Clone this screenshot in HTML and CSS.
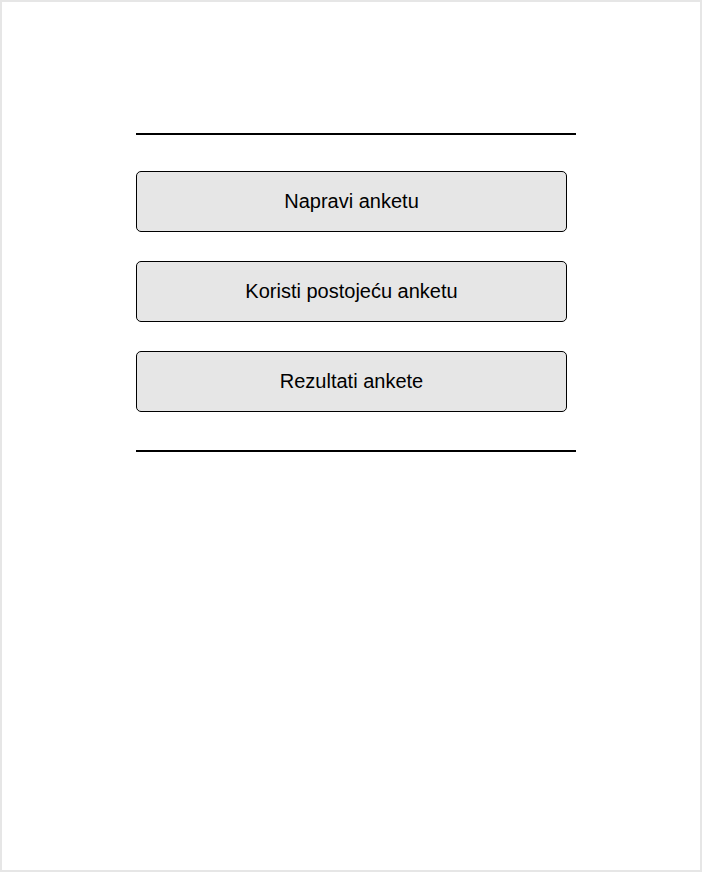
FILE: index.html
```html
<!DOCTYPE html>
<html lang="en">
<head>
    <meta charset="UTF-8">
    <meta name="viewport" content="width=device-width, initial-scale=1.0">
    <title>Anketa</title>
    <link rel="stylesheet" href="styles.css">
</head>
<body>
    <div class="frame">
        <div class="menu">
            <div class="rule"></div>
            <div class="buttons">
                <button class="btn">Napravi anketu</button>
                <button class="btn">Koristi postojeću anketu</button>
                <button class="btn">Rezultati ankete</button>
            </div>
            <div class="rule"></div>
        </div>
    </div>
</body>
</html>
```

FILE: styles.css
```css
* {
    box-sizing: border-box;
}

body {
    margin: 0;
    font-family: "Liberation Sans", Arial, sans-serif;
    background-color: #fff;
}

.frame {
    width: 702px;
    height: 872px;
    border: 2px solid #e6e6e6;
    padding-top: 131px;
    padding-left: 134px;
}

.menu {
    width: 440px;
}

.rule {
    height: 2px;
    background-color: #000;
}

.buttons {
    display: flex;
    flex-direction: column;
    gap: 29px;
    padding: 36px 0 38px;
}

.btn {
    width: 431px;
    height: 61px;
    border: 1px solid #000;
    border-radius: 5px;
    background-color: #e6e6e6;
    font-family: "Liberation Sans", Arial, sans-serif;
    font-size: 20px;
    color: #000;
    padding: 0;
}
```
